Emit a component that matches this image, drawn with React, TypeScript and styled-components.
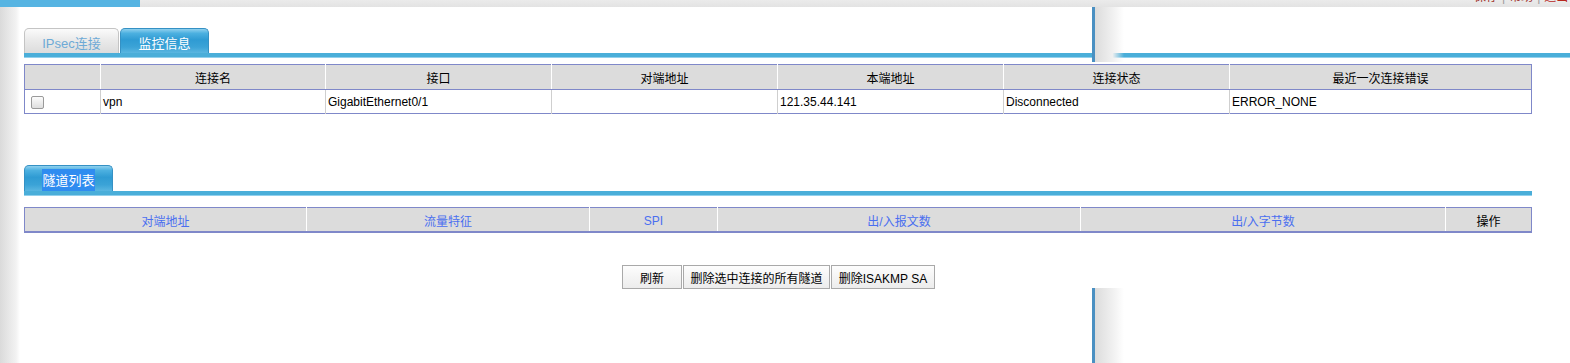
import React from "react";
import styled, { createGlobalStyle } from "styled-components";

const Global = createGlobalStyle`
  html, body { margin: 0; padding: 0; background: #fff; }
  body { font-family: "Liberation Sans", Arial, "Noto Sans CJK SC", sans-serif; font-size: 12px; color: #000; }
`;

const Page = styled.div`
  position: relative;
  width: 1570px;
  height: 363px;
  overflow: hidden;
  background: #fff;
`;

const TopStrip = styled.div`
  display: flex;
  height: 7px;
  background: linear-gradient(#ebebeb, #e3e3e3);
  overflow: hidden;
`;

const TopBlue = styled.div`
  width: 140px;
  background: #56b4e2;
`;

const TopLinks = styled.div`
  margin-left: auto;
  margin-top: -10px;
  line-height: 14px;
  font-size: 12px;
  white-space: nowrap;
  color: #999;
  width: 96px;
`;

const TopLink = styled.span<{ $red?: boolean }>`
  color: ${(p) => (p.$red ? "#b8261c" : "#a0302a")};
`;

const Sep = styled.span`
  color: #999;
  margin: 0 4px;
`;

const Main = styled.div`
  display: flex;
  height: 356px;
`;

const LeftShade = styled.div`
  width: 20px;
  flex: none;
  background: linear-gradient(to right, #dadada, #f2f2f2 80%, #fff);
`;

const Content = styled.div`
  flex: 1;
  padding-left: 4px;
  display: flex;
  flex-direction: column;
`;

const TabBar = styled.div<{ $top: number; $width: number }>`
  margin-top: ${(p) => p.$top}px;
  width: ${(p) => p.$width}px;
  display: flex;
  align-items: flex-end;
  border-bottom: 5px solid #4aaed9;
  position: relative;
`;

const TabLine = styled.div`
  position: absolute;
  left: 0;
  right: 0;
  bottom: -5px;
  height: 1px;
  background: #92d0ec;
`;

const Tab = styled.div<{ $active?: boolean; $w: number; $h: number }>`
  width: ${(p) => p.$w}px;
  height: ${(p) => p.$h}px;
  box-sizing: border-box;
  border-radius: 5px 5px 0 0;
  display: flex;
  align-items: center;
  justify-content: center;
  font-size: 13px;
  padding-top: 2px;
  margin-right: 1px;
  border: 1px solid ${(p) => (p.$active ? "#3591c4" : "#c4c4c4")};
  border-bottom: none;
  color: ${(p) => (p.$active ? "#fff" : "#6eaad6")};
  background: ${(p) =>
    p.$active
      ? "linear-gradient(#8fd0ee 0%, #4cb0e0 18%, #2f9bd3 45%, #3ba3d7 75%, #5ab6e0 100%)"
      : "linear-gradient(#fbfbfb 0%, #ececec 40%, #dcdcdc 100%)"};
`;

const Selected = styled.span`
  background: #2f8cf0;
  color: #fff;
  padding: 1px 0 2px;
`;

const Grid = styled.table<{ $top: number }>`
  margin-top: ${(p) => p.$top}px;
  width: 1507px;
  border-collapse: collapse;
  table-layout: fixed;
  border: 1px solid #7f88c9;
  font-size: 12px;
`;

const HeadCell = styled.th<{ $blue?: boolean }>`
  height: 24px;
  padding: 0;
  background: #dcdcdc;
  font-weight: normal;
  text-align: center;
  color: ${(p) => (p.$blue ? "#4a6ff0" : "#000")};
  border-left: 1px solid #fff;
  border-bottom: 1px solid #7f88c9;
  &:first-child { border-left: none; }
`;

const HeadRow2 = styled.tr`
  th { height: 21px; border-bottom: 2px solid #7f88c9; padding-top: 2px; }
`;

const Cell = styled.td`
  height: 23px;
  padding: 0 2px;
  text-align: left;
  border-left: 1px solid #cfcfcf;
  &:first-child { border-left: none; }
  white-space: nowrap;
`;

const Check = styled.span`
  display: inline-block;
  width: 11px;
  height: 11px;
  margin-left: 4px;
  margin-top: 2px;
  border: 1px solid #9a9a9a;
  border-radius: 2px;
  background: linear-gradient(#fcfcfc, #dedede);
  vertical-align: middle;
`;

const ButtonRow = styled.div`
  width: 1507px;
  margin-top: 32px;
  display: flex;
  justify-content: center;
  gap: 1px;
  padding-left: 1px;
`;

const Button = styled.button<{ $w: number }>`
  width: ${(p) => p.$w}px;
  height: 24px;
  padding: 0;
  font-family: inherit;
  font-size: 12px;
  color: #000;
  border: 1px solid #a9a9a9;
  border-radius: 0;
  background: linear-gradient(#fdfdfd, #ececec);
`;

const VLine = styled.div<{ $top: number; $h: number }>`
  position: absolute;
  left: 1092px;
  top: ${(p) => p.$top}px;
  height: ${(p) => p.$h}px;
  width: 32px;
  display: flex;
`;

const VLineBar = styled.div`
  width: 3px;
  background: #4a90c2;
`;

const VLineShade = styled.div`
  flex: 1;
  background: linear-gradient(to right, #dcdcdc, #f0f0f0 60%, rgba(255,255,255,0));
`;

const cols1 = [76, 225, 226, 226, 226, 226, 302];
const heads1 = ["", "连接名", "接口", "对端地址", "本端地址", "连接状态", "最近一次连接错误"];
const row1 = ["vpn", "GigabitEthernet0/1", "", "121.35.44.141", "Disconnected", "ERROR_NONE"];

const cols2 = [282, 283, 128, 363, 365, 86];
const heads2 = ["对端地址", "流量特征", "SPI", "出/入报文数", "出/入字节数", "操作"];

export default function App() {
  return (
    <Page>
      <Global />
      <TopStrip>
        <TopBlue />
        <TopLinks>
          <TopLink>保存</TopLink>
          <Sep>|</Sep>
          <TopLink>帮助</TopLink>
          <Sep>|</Sep>
          <TopLink $red>退出</TopLink>
        </TopLinks>
      </TopStrip>
      <Main>
        <LeftShade />
        <Content>
          <TabBar $top={21} $width={1546}>
            <Tab $w={95} $h={25}>IPsec连接</Tab>
            <Tab $active $w={89} $h={25}>监控信息</Tab>
            <TabLine />
          </TabBar>
          <Grid $top={6}>
            <colgroup>
              {cols1.map((w, i) => (
                <col key={i} style={{ width: w }} />
              ))}
            </colgroup>
            <thead>
              <tr>
                {heads1.map((h, i) => (
                  <HeadCell key={i}>{h}</HeadCell>
                ))}
              </tr>
            </thead>
            <tbody>
              <tr>
                <Cell>
                  <Check />
                </Cell>
                {row1.map((c, i) => (
                  <Cell key={i}>{c}</Cell>
                ))}
              </tr>
            </tbody>
          </Grid>
          <TabBar $top={51} $width={1508}>
            <Tab $active $w={89} $h={26}>
              <Selected>隧道列表</Selected>
            </Tab>
            <TabLine />
          </TabBar>
          <Grid $top={11}>
            <colgroup>
              {cols2.map((w, i) => (
                <col key={i} style={{ width: w }} />
              ))}
            </colgroup>
            <thead>
              <HeadRow2>
                {heads2.map((h, i) => (
                  <HeadCell key={i} $blue={i < 5}>
                    {h}
                  </HeadCell>
                ))}
              </HeadRow2>
            </thead>
          </Grid>
          <ButtonRow>
            <Button $w={60}>刷新</Button>
            <Button $w={147}>删除选中连接的所有隧道</Button>
            <Button $w={104}>删除ISAKMP SA</Button>
          </ButtonRow>
        </Content>
      </Main>
      <VLine $top={7} $h={55}>
        <VLineBar />
        <VLineShade />
      </VLine>
      <VLine $top={288} $h={75}>
        <VLineBar />
        <VLineShade />
      </VLine>
    </Page>
  );
}
